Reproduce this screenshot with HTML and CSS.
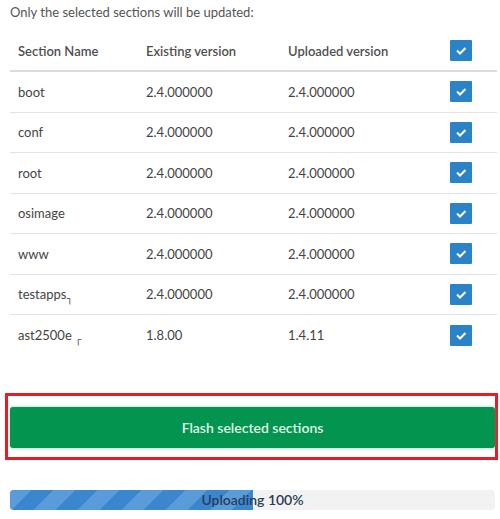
FILE: index.html
```html
<!DOCTYPE html>
<html>
<head>
<meta charset="utf-8">
<link rel="stylesheet" href="styles.css">
</head>
<body>
<div class="page">
  <p class="caption">Only the selected sections will be updated:</p>
  <div class="table">
    <div class="row head">
      <div class="cell">Section Name</div>
      <div class="cell">Existing version</div>
      <div class="cell">Uploaded version</div>
      <div class="cell chk"><span class="box"><svg viewBox="0 0 22 21" width="22" height="21"><path d="M7 10.5l3 3 5.5-5.5" fill="none" stroke="#fff" stroke-width="2"/></svg></span></div>
    </div>
    <div class="row">
      <div class="cell">boot</div><div class="cell">2.4.000000</div><div class="cell">2.4.000000</div>
      <div class="cell chk"><span class="box"><svg viewBox="0 0 22 21" width="22" height="21"><path d="M7 10.5l3 3 5.5-5.5" fill="none" stroke="#fff" stroke-width="2"/></svg></span></div>
    </div>
    <div class="row">
      <div class="cell">conf</div><div class="cell">2.4.000000</div><div class="cell">2.4.000000</div>
      <div class="cell chk"><span class="box"><svg viewBox="0 0 22 21" width="22" height="21"><path d="M7 10.5l3 3 5.5-5.5" fill="none" stroke="#fff" stroke-width="2"/></svg></span></div>
    </div>
    <div class="row">
      <div class="cell">root</div><div class="cell">2.4.000000</div><div class="cell">2.4.000000</div>
      <div class="cell chk"><span class="box"><svg viewBox="0 0 22 21" width="22" height="21"><path d="M7 10.5l3 3 5.5-5.5" fill="none" stroke="#fff" stroke-width="2"/></svg></span></div>
    </div>
    <div class="row">
      <div class="cell">osimage</div><div class="cell">2.4.000000</div><div class="cell">2.4.000000</div>
      <div class="cell chk"><span class="box"><svg viewBox="0 0 22 21" width="22" height="21"><path d="M7 10.5l3 3 5.5-5.5" fill="none" stroke="#fff" stroke-width="2"/></svg></span></div>
    </div>
    <div class="row">
      <div class="cell">www</div><div class="cell">2.4.000000</div><div class="cell">2.4.000000</div>
      <div class="cell chk"><span class="box"><svg viewBox="0 0 22 21" width="22" height="21"><path d="M7 10.5l3 3 5.5-5.5" fill="none" stroke="#fff" stroke-width="2"/></svg></span></div>
    </div>
    <div class="row">
      <div class="cell">testapps<span class="mark">┐</span></div><div class="cell">2.4.000000</div><div class="cell">2.4.000000</div>
      <div class="cell chk"><span class="box"><svg viewBox="0 0 22 21" width="22" height="21"><path d="M7 10.5l3 3 5.5-5.5" fill="none" stroke="#fff" stroke-width="2"/></svg></span></div>
    </div>
    <div class="row last">
      <div class="cell">ast2500e <span class="mark">┌</span></div><div class="cell">1.8.00</div><div class="cell">1.4.11</div>
      <div class="cell chk"><span class="box"><svg viewBox="0 0 22 21" width="22" height="21"><path d="M7 10.5l3 3 5.5-5.5" fill="none" stroke="#fff" stroke-width="2"/></svg></span></div>
    </div>
  </div>
  <div class="highlight">
    <button class="flash">Flash selected sections</button>
  </div>
  <div class="progress">
    <div class="fill" style="width:50%"></div>
    <span class="label">Uploading 100%</span>
  </div>
</div>
</body>
</html>
```
FILE: styles.css
```css
* { box-sizing: border-box; }
html, body { margin: 0; padding: 0; background: #fff; }
body { font-family: Lato, "Open Sans", sans-serif; color: #333; }
.page { width: 500px; padding: 0 0 0 10px; }
.caption {
  margin: 0;
  height: 31px;
  padding-top: 3px;
  line-height: 18px;
  font-size: 13px;
  color: #555;
}
.table { width: 487px; }
.row {
  display: grid;
  grid-template-columns: 128px 142px 142px 1fr;
  align-items: center;
  height: 40.5px;
  border-bottom: 1px solid #e3e3e3;
  font-size: 13px;
  color: #444;
}
.row.head { height: 41px; border-bottom: 2px solid #dcdcdc; font-weight: 600; color: #505050; }
.row.last { border-bottom: none; }
.cell { padding-left: 8px; white-space: nowrap; }
.cell.chk { padding-left: 28px; display: flex; }
.box { display: block; width: 22px; height: 21px; background: #2a83c6; border-radius: 1px; }
.box svg { display: block; }
.mark { font-family: "DejaVu Sans", sans-serif; font-size: 10px; position: relative; top: 3px; }
.highlight {
  margin: 37px 0 0 -5px;
  width: 493px;
  height: 67px;
  border: 3px solid #e51d25;
  padding: 11px 0 0 2px;
}
.flash {
  display: block;
  width: 485px;
  height: 41px;
  border: none;
  border-radius: 3px;
  background: #03954f;
  box-shadow: 0 0 3px 1px rgba(70, 190, 150, 0.35);
  color: #dff5e6;
  font-family: Lato, "Open Sans", sans-serif;
  font-weight: 600;
  font-size: 14px;
  padding: 0;
}
.progress {
  position: relative;
  margin-top: 30px;
  width: 485px;
  height: 20px;
  background: #f2f2f2;
  border-radius: 4px;
  overflow: hidden;
  display: flex;
  align-items: center;
  justify-content: center;
}
.fill {
  position: absolute;
  left: 0; top: 0; bottom: 0;
  background-color: #3a87d0;
  background-image: linear-gradient(135deg, #5a9cd9 25%, transparent 25%, transparent 50%, #5a9cd9 50%, #5a9cd9 75%, transparent 75%, transparent);
  background-size: 44px 44px;
}
.label {
  position: relative;
  font-size: 14px;
  font-weight: 600;
  color: #2a3d56;
}
```
